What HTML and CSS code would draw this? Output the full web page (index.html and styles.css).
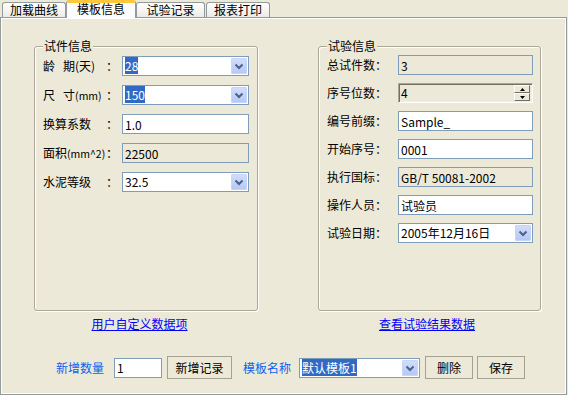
FILE: index.html
```html
<!DOCTYPE html>
<html lang="zh-CN">

<head>
  <meta charset="UTF-8">
  <title>模板信息</title>
  <link rel="stylesheet" href="styles.css">
</head>

<body>
  <div class="window">
    <div class="tabs">
      <div class="tab">加载曲线</div>
      <div class="tab tab-active">模板信息</div>
      <div class="tab tab-wide">试验记录</div>
      <div class="tab">报表打印</div>
    </div>

    <div class="page">
      <div class="groups">
        <fieldset class="group group-left">
          <legend>试件信息</legend>
          <div class="form form-left">
            <span class="label">龄&nbsp;&nbsp;&nbsp;期(天)</span><span class="colon">：</span>
            <div class="combo">
              <span class="combo-value"><span class="sel">28</span></span>
              <span class="combo-btn"><svg viewBox="0 0 16 16" width="16" height="16"><path d="M4.5 6.5 8 10l3.5-3.5" fill="none" stroke="#4D6185" stroke-width="2"/></svg></span>
            </div>

            <span class="label">尺&nbsp;&nbsp;&nbsp;寸<span class="unit">(mm)</span></span><span class="colon">：</span>
            <div class="combo">
              <span class="combo-value"><span class="sel">150</span></span>
              <span class="combo-btn"><svg viewBox="0 0 16 16" width="16" height="16"><path d="M4.5 6.5 8 10l3.5-3.5" fill="none" stroke="#4D6185" stroke-width="2"/></svg></span>
            </div>

            <span class="label">换算系数</span><span class="colon">：</span>
            <input class="field" type="text" value="1.0">

            <span class="label">面积<span class="unit">(mm^2)</span></span><span class="colon">：</span>
            <input class="field field-ro" type="text" value="22500" readonly>

            <span class="label">水泥等级</span><span class="colon">：</span>
            <div class="combo">
              <span class="combo-value">32.5</span>
              <span class="combo-btn"><svg viewBox="0 0 16 16" width="16" height="16"><path d="M4.5 6.5 8 10l3.5-3.5" fill="none" stroke="#4D6185" stroke-width="2"/></svg></span>
            </div>
          </div>
        </fieldset>

        <fieldset class="group group-right">
          <legend>试验信息</legend>
          <div class="form form-right">
            <span class="label">总试件数：</span>
            <input class="field field-ro" type="text" value="3" readonly>

            <span class="label">序号位数：</span>
            <div class="spin">
              <span class="spin-value">4</span>
              <span class="spin-btns">
                <span class="spin-btn"><svg viewBox="0 0 5 3" width="5" height="3"><path d="M2.5 0 5 3H0z" fill="#000"/></svg></span>
                <span class="spin-btn"><svg viewBox="0 0 5 3" width="5" height="3"><path d="M0 0h5L2.5 3z" fill="#000"/></svg></span>
              </span>
            </div>

            <span class="label">编号前缀：</span>
            <input class="field" type="text" value="Sample_">

            <span class="label">开始序号：</span>
            <input class="field" type="text" value="0001">

            <span class="label">执行国标：</span>
            <input class="field field-ro" type="text" value="GB/T 50081-2002" readonly>

            <span class="label">操作人员：</span>
            <input class="field" type="text" value="试验员">

            <span class="label">试验日期：</span>
            <div class="combo">
              <span class="combo-value">2005年12月16日</span>
              <span class="combo-btn"><svg viewBox="0 0 16 16" width="16" height="16"><path d="M4.5 6.5 8 10l3.5-3.5" fill="none" stroke="#4D6185" stroke-width="2"/></svg></span>
            </div>
          </div>
        </fieldset>
      </div>

      <div class="links">
        <div class="link-cell link-left"><a href="#">用户自定义数据项</a></div>
        <div class="link-cell link-right"><a href="#">查看试验结果数据</a></div>
      </div>

      <div class="actions">
        <span class="act-label">新增数量</span>
        <input class="field count" type="text" value="1">
        <button class="btn btn-add">新增记录</button>
        <span class="act-label act-label-name">模板名称</span>
        <div class="combo combo-template">
          <span class="combo-value"><span class="sel">默认模板1</span></span>
          <span class="combo-btn"><svg viewBox="0 0 16 16" width="16" height="16"><path d="M4.5 6.5 8 10l3.5-3.5" fill="none" stroke="#4D6185" stroke-width="2"/></svg></span>
        </div>
        <button class="btn btn-small">删除</button>
        <button class="btn btn-small">保存</button>
      </div>
    </div>
  </div>
</body>

</html>
```

FILE: styles.css
```css
* {
  box-sizing: border-box;
}

body {
  margin: 0;
  background: #ECE9D8;
  font-family: "Noto Sans CJK SC", sans-serif;
  font-size: 12px;
  line-height: 14px;
  color: #000;
}

.window {
  width: 568px;
  height: 395px;
}

/* tab strip */
.tabs {
  display: flex;
  align-items: flex-end;
  height: 17px;
  padding-left: 2px;
  gap: 1px;
}

.tab {
  width: 64px;
  height: 15px;
  border: 1px solid #919B9C;
  border-bottom: none;
  border-radius: 3px 3px 0 0;
  background: linear-gradient(#FFFFFF, #ECEBE6);
  text-align: center;
  line-height: 14px;
}

.tab-wide {
  width: 69px;
}

.tab-active {
  position: relative;
  z-index: 1;
  width: 70px;
  height: 18px;
  margin: 0 -1px -1px;
  border-top: 3px solid #FFC83C;
  background: #FCFCFE;
  line-height: 12px;
}

/* tab page */
.page {
  width: 567px;
  height: 378px;
  border: 1px solid #919B9C;
  box-shadow: inset 1px 1px 0 #fff, inset -1px -1px 0 #fff;
  padding: 21px 0 0 33px;
}

.groups {
  display: flex;
  gap: 60px;
}

.group {
  margin: 0;
  min-width: 0;
  height: 272px;
  padding: 3px 7px 0 8px;
  border: 1px solid #ACA899;
  border-radius: 3px;
  box-shadow: 1px 1px 0 #fff, inset 1px 1px 0 #fff;
}

.group-left {
  width: 224px;
}

.group-right {
  width: 223px;
  padding-top: 2px;
}

.group legend {
  padding: 0 1px;
  background: #ECE9D8;
  line-height: 14px;
}

.form {
  display: grid;
  align-items: center;
}

.form-left {
  grid-template-columns: 63px 16px 127px;
  grid-auto-rows: 20px;
  row-gap: 9px;
}

.form-right {
  grid-template-columns: 71px 135px;
  grid-auto-rows: 20px;
  row-gap: 8px;
}

.label,
.colon {
  white-space: nowrap;
}

.unit {
  font-size: 10.5px;
}

/* text boxes */
.field {
  width: 100%;
  height: 20px;
  margin: 0;
  padding: 0 2px;
  border: 1px solid #7F9DB9;
  background: #fff;
  font: inherit;
  color: #000;
  outline: none;
}

.field-ro {
  background: #ECE9D8;
}

/* combo boxes */
.combo {
  display: flex;
  align-items: center;
  height: 20px;
  padding: 0 1px;
  border: 1px solid #7F9DB9;
  background: #fff;
}

.combo-value {
  flex: 1;
  padding-left: 1px;
  white-space: nowrap;
}

.sel {
  background: #316AC5;
  color: #fff;
}

.combo-btn {
  display: flex;
  width: 16px;
  height: 16px;
  border-radius: 2px;
  background: linear-gradient(#D2DEFC, #B4C7F5);
  box-shadow: inset 0 0 0 1px #C6D5FB;
}

/* spin box */
.spin {
  display: flex;
  align-items: center;
  height: 20px;
  padding: 0 1px 0 2px;
  border: 1px solid;
  border-color: #ACA899 #fff #fff #ACA899;
  box-shadow: inset 1px 1px 0 #716F64, inset -1px -1px 0 #F1EFE2;
  background: #ECE9D8;
}

.spin-value {
  flex: 1;
}

.spin-btns {
  display: flex;
  flex-direction: column;
  width: 16px;
  margin-right: 1px;
}

.spin-btn {
  display: flex;
  align-items: center;
  justify-content: center;
  height: 8px;
  border: 1px solid;
  border-color: #fff #716F64 #716F64 #fff;
  background: #ECE9D8;
}

/* links */
.links {
  display: flex;
  gap: 60px;
  margin-top: 6px;
}

.link-cell {
  text-align: center;
}

.link-left {
  width: 224px;
  padding-right: 13px;
}

.link-right {
  width: 223px;
  padding-right: 5px;
}

.links a {
  color: #0000FF;
  text-decoration: underline;
}

/* bottom bar */
.actions {
  display: flex;
  align-items: center;
  height: 23px;
  margin-top: 25px;
  padding-left: 22px;
}

.act-label {
  margin-right: 10px;
  color: #0E5FF2;
  white-space: nowrap;
}

.act-label-name {
  margin-right: 8px;
}

.count {
  width: 48px;
  margin-right: 5px;
}

.btn {
  height: 23px;
  margin: 0;
  padding: 0;
  border: 1px solid #A6A290;
  border-radius: 0;
  background: #ECE9D8;
  font: inherit;
  color: #000;
}

.btn-add {
  width: 65px;
  margin-right: 11px;
}

.btn-small {
  width: 48px;
  margin-left: 4px;
}

.combo-template {
  width: 121px;
  margin-right: 1px;
}
```
